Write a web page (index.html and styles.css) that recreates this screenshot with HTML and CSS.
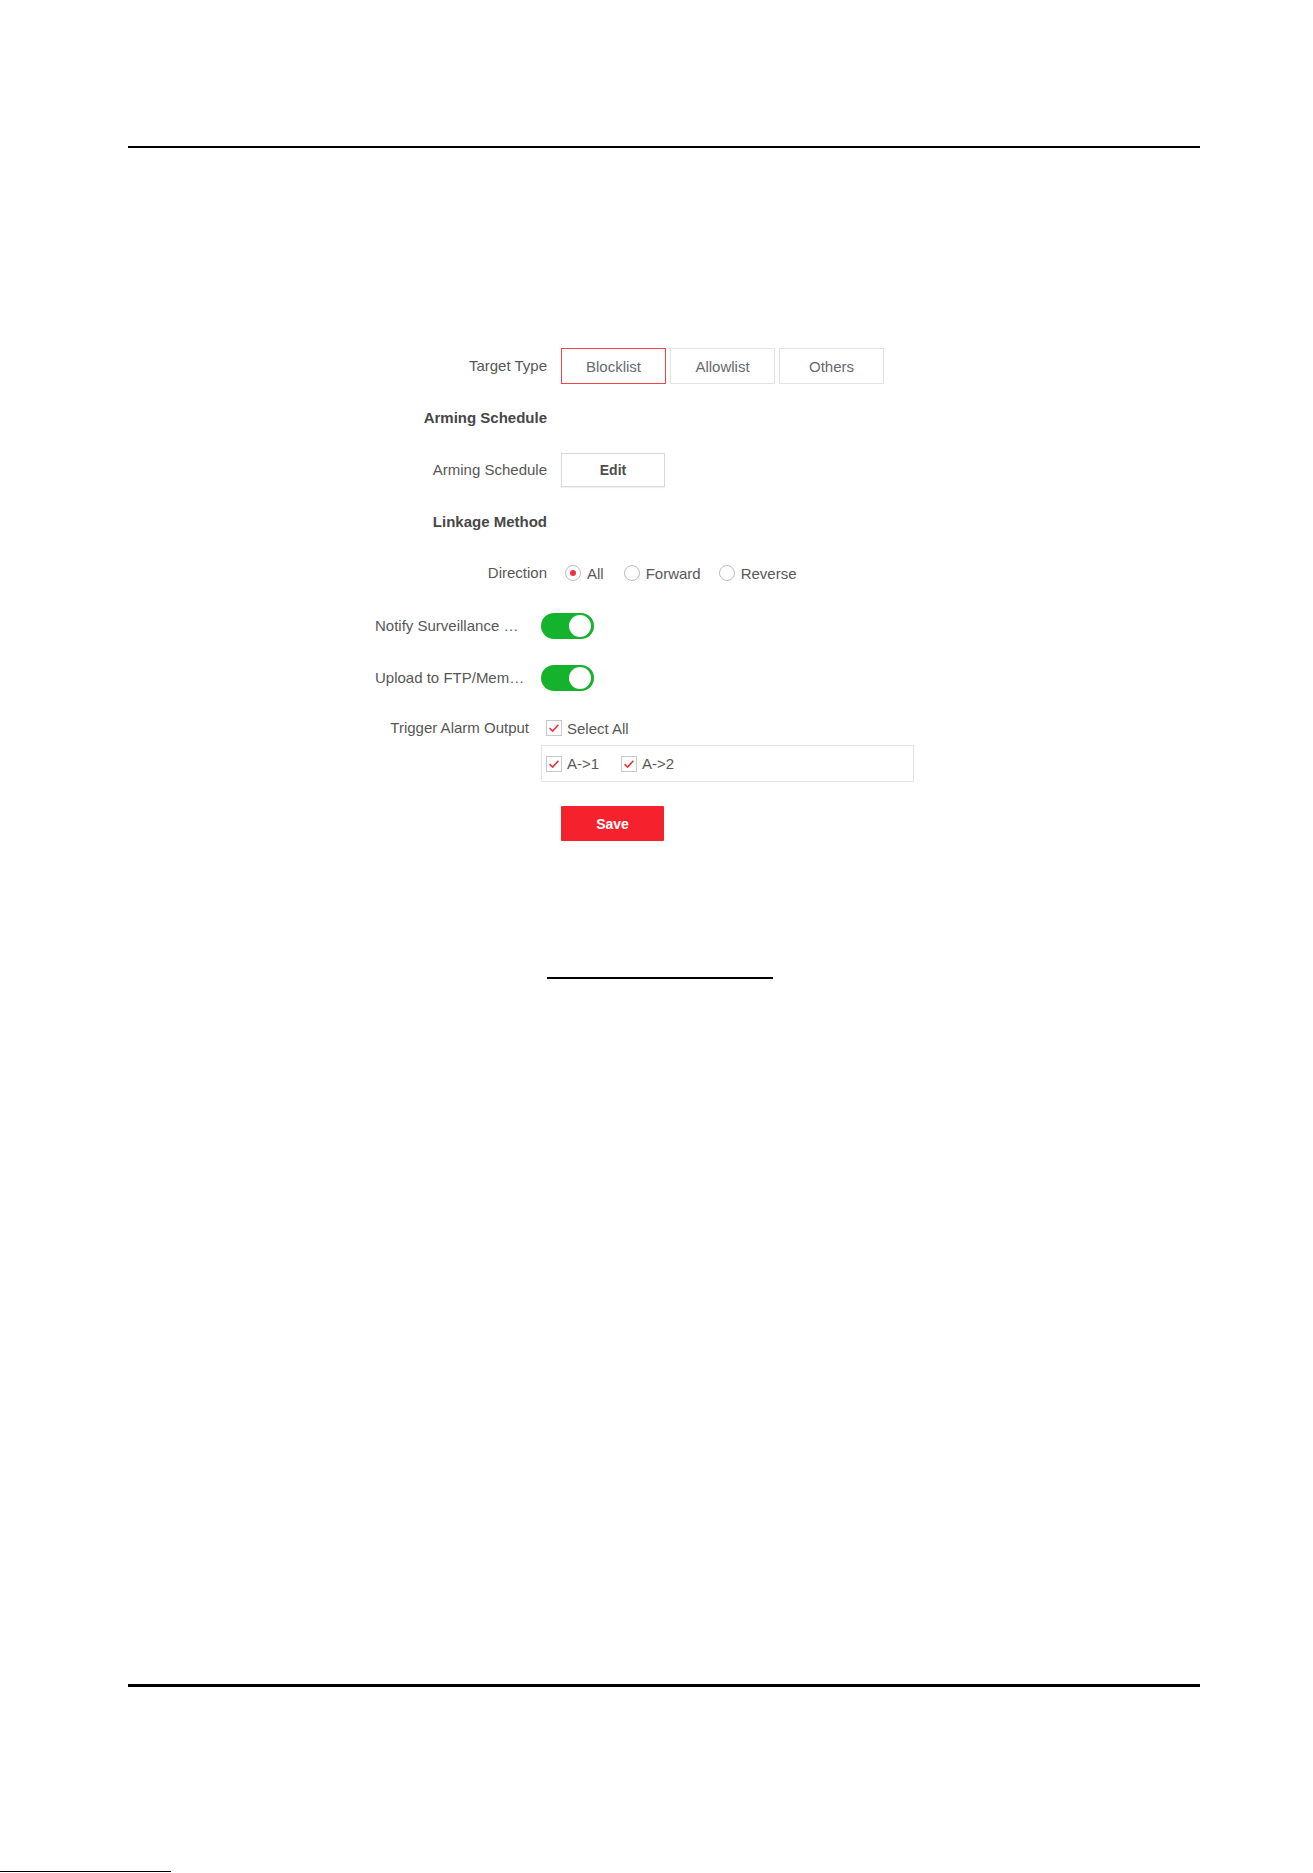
FILE: index.html
```html
<!DOCTYPE html>
<html lang="en">
<head>
<meta charset="utf-8">
<title>Blocklist Linkage Settings</title>
<link rel="stylesheet" href="styles.css">
</head>
<body>
<div class="page">
  <div class="header-rule"></div>

  <form class="form">
    <div class="row row-1 sec-a">
      <div class="label">Target Type</div>
      <div class="controls seg">
        <button type="button" class="seg-btn active">Blocklist</button>
        <button type="button" class="seg-btn">Allowlist</button>
        <button type="button" class="seg-btn">Others</button>
      </div>
    </div>

    <div class="row row-2 sec-a">
      <div class="label title">Arming Schedule</div>
    </div>

    <div class="row row-3 sec-a">
      <div class="label">Arming Schedule</div>
      <div class="controls">
        <button type="button" class="edit-btn">Edit</button>
      </div>
    </div>

    <div class="row row-4 sec-a">
      <div class="label title">Linkage Method</div>
    </div>

    <div class="row row-5 sec-a">
      <div class="label">Direction</div>
      <div class="controls radios">
        <span class="radio-item"><span class="radio checked"></span><span>All</span></span>
        <span class="radio-item"><span class="radio"></span><span>Forward</span></span>
        <span class="radio-item"><span class="radio"></span><span>Reverse</span></span>
      </div>
    </div>

    <div class="row row-6 sec-b">
      <div class="label ellip" title="Notify Surveillance Center">Notify Surveillance Center</div>
      <div class="controls"><span class="toggle on"><span class="knob"></span></span></div>
    </div>

    <div class="row row-7 sec-b">
      <div class="label ellip" title="Upload to FTP/Memory Card/NAS">Upload to FTP/Memory Card/NAS</div>
      <div class="controls"><span class="toggle on"><span class="knob"></span></span></div>
    </div>

    <div class="row-trigger sec-b">
      <div class="label trig-label">Trigger Alarm Output</div>
      <div class="controls trig-controls">
        <div class="check-line">
          <span class="check-item"><span class="checkbox"><svg viewBox="0 0 16 16" width="16" height="16"><path d="M3.6 8.2 L6.6 11 L12.4 4.8" fill="none" stroke="#f0323c" stroke-width="1.6"/></svg></span><span>Select All</span></span>
        </div>
        <div class="check-box">
          <span class="check-item"><span class="checkbox"><svg viewBox="0 0 16 16" width="16" height="16"><path d="M3.6 8.2 L6.6 11 L12.4 4.8" fill="none" stroke="#f0323c" stroke-width="1.6"/></svg></span><span>A-&gt;1</span></span>
          <span class="check-item"><span class="checkbox"><svg viewBox="0 0 16 16" width="16" height="16"><path d="M3.6 8.2 L6.6 11 L12.4 4.8" fill="none" stroke="#f0323c" stroke-width="1.6"/></svg></span><span>A-&gt;2</span></span>
        </div>
      </div>
    </div>

    <div class="row-save sec-a">
      <div class="label"></div>
      <div class="controls"><button type="button" class="save-btn">Save</button></div>
    </div>
  </form>

  <div class="short-rule"></div>
  <div class="footer-rule"></div>
  <div class="edge-rule"></div>
</div>
</body>
</html>
```

FILE: styles.css
```css
html, body {
  margin: 0;
  padding: 0;
  background: #ffffff;
}
body {
  font-family: "Liberation Sans", Arial, sans-serif;
  font-size: 15px;
  color: #555555;
  overflow: hidden;
}
.page {
  width: 1313px;
  height: 1873px;
  overflow: hidden;
}
.header-rule {
  height: 146px;
  margin-left: 128px;
  width: 1072px;
  border-bottom: 2px solid #000;
}

.form {
  margin-top: 192px;
  margin-left: 375px;
  display: flex;
  flex-direction: column;
}
.row {
  display: flex;
  align-items: center;
}
.row-1 { height: 52px; }
.row-2 { height: 51px; }
.row-3 { height: 54px; }
.row-4 { height: 50px; }
.row-5 { height: 52px; }
.row-6 { height: 53px; }
.row-7 { height: 52px; }

.label {
  flex: none;
  text-align: right;
  color: #575757;
  line-height: 20px;
  white-space: nowrap;
}
.sec-a .label { width: 172px; margin-right: 14px; }
.sec-b .label { width: 154px; margin-right: 12px; }
.label.title {
  font-weight: bold;
  color: #474747;
}
.sec-b .label.ellip {
  overflow: hidden;
  text-overflow: ellipsis;
  text-align: left;
  width: 152px;
  margin-right: 14px;
}

.controls {
  display: flex;
  align-items: center;
}
.seg { gap: 4px; }
.seg-btn {
  width: 105px;
  height: 36px;
  background: #fff;
  border: 1px solid #e2e2e2;
  font-family: "Liberation Sans", Arial, sans-serif;
  font-size: 15px;
  color: #666a70;
  padding: 0;
  margin: 0;
}
.seg-btn.active {
  border-color: #f2434c;
}
.edit-btn {
  width: 104px;
  height: 34px;
  background: #fff;
  border: 1px solid #d9d9d9;
  box-shadow: 0 1px 1px rgba(0,0,0,0.06);
  font-family: "Liberation Sans", Arial, sans-serif;
  font-size: 14px;
  font-weight: bold;
  color: #4e4e4e;
  padding: 0;
  margin: 0;
}

.radios { gap: 0; margin-left: 4px; }
.radio-item {
  display: inline-flex;
  align-items: center;
  gap: 6px;
  margin-right: 20px;
  color: #575757;
}
.radio-item:nth-child(2) { margin-right: 18px; }
.radio {
  width: 14px;
  height: 14px;
  border: 1px solid #bdbdbd;
  border-radius: 50%;
  display: inline-flex;
  align-items: center;
  justify-content: center;
  background: #fff;
}
.radio.checked::after {
  content: "";
  width: 6px;
  height: 6px;
  border-radius: 50%;
  background: #f0323c;
}

.toggle {
  position: relative;
  display: inline-block;
  width: 53px;
  height: 26px;
  border-radius: 13px;
  background: #c8c8c8;
}
.toggle.on { background: #15b22e; }
.knob {
  position: absolute;
  top: 2px;
  right: 3px;
  width: 22px;
  height: 22px;
  border-radius: 50%;
  background: #fff;
}

.row-trigger {
  display: flex;
  align-items: flex-start;
  padding-top: 12px;
}
.trig-label { line-height: 24px; }
.trig-controls {
  flex-direction: column;
  align-items: flex-start;
}
.check-line {
  height: 24px;
  display: flex;
  align-items: center;
  padding-left: 5px;
}
.check-box {
  margin-top: 5px;
  width: 367px;
  height: 35px;
  border: 1px solid #e4e4e4;
  display: flex;
  align-items: center;
  padding-left: 4px;
  gap: 22px;
  box-sizing: content-box;
}
.check-item {
  display: inline-flex;
  align-items: center;
  gap: 5px;
  color: #575757;
}
.checkbox {
  width: 16px;
  height: 16px;
  box-sizing: border-box;
  border: 1px solid #c9c9c9;
  background: #fff;
  display: inline-flex;
  position: relative;
}
.checkbox svg {
  position: absolute;
  left: -1px;
  top: -1px;
}

.row-save {
  display: flex;
  margin-top: 24px;
}
.save-btn {
  width: 103px;
  height: 35px;
  background: #f5222d;
  border: none;
  border-radius: 1px;
  color: #fff;
  font-family: "Liberation Sans", Arial, sans-serif;
  font-size: 14px;
  font-weight: bold;
  padding: 0;
  margin: 0;
}

.short-rule {
  margin-top: 136px;
  margin-left: 547px;
  width: 226px;
  height: 2px;
  background: #000;
}
.footer-rule {
  margin-top: 705px;
  margin-left: 128px;
  width: 1072px;
  height: 3px;
  background: #000;
}
.edge-rule {
  margin-top: 184px;
  width: 171px;
  height: 1px;
  background: #000;
}
```
